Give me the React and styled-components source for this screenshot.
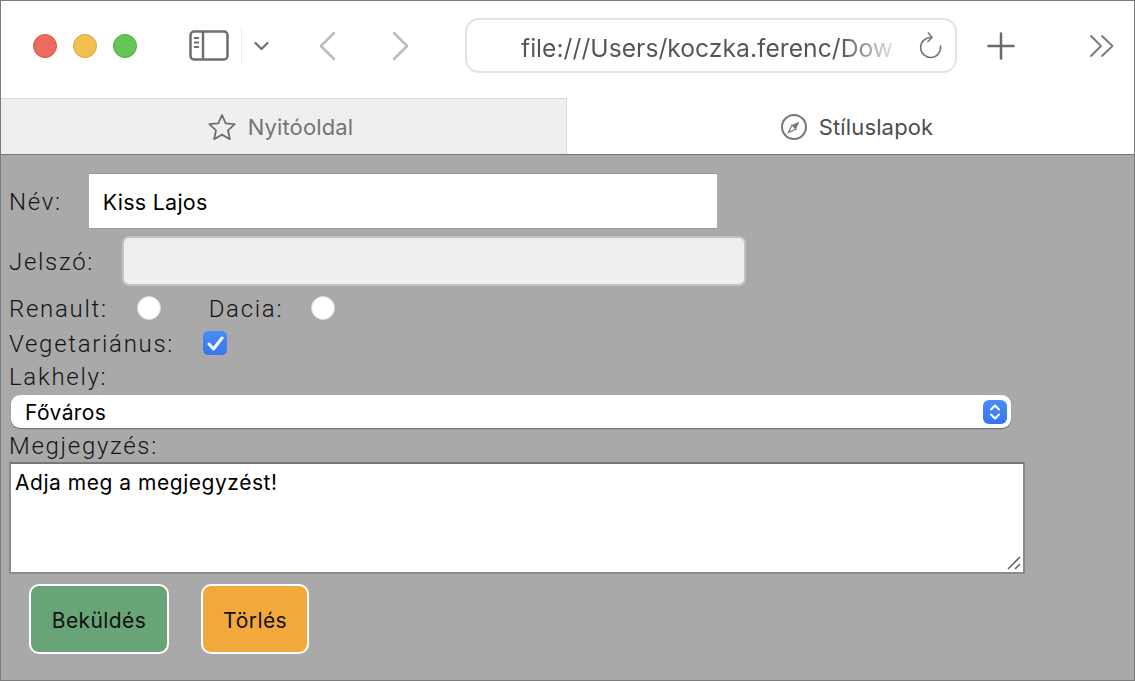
import React from "react";
import styled, { createGlobalStyle } from "styled-components";

const GlobalStyle = createGlobalStyle`
  html, body {
    margin: 0;
    padding: 0;
    background: #a9a9a9;
  }
  * {
    box-sizing: border-box;
  }
`;

const Window = styled.div`
  width: 1135px;
  height: 681px;
  border: 1px solid #7b7b7b;
  display: flex;
  flex-direction: column;
  overflow: hidden;
  font-family: Inter, "Liberation Sans", sans-serif;
  background: #a9a9a9;
`;

const Toolbar = styled.div`
  height: 97px;
  flex: none;
  background: #fff;
  display: flex;
  align-items: center;
  padding: 0 20px 8px 32px;
`;

const Light = styled.span`
  width: 24px;
  height: 24px;
  margin-right: 16px;
  border-radius: 50%;
  background: ${(p) => p.$color};
  border: 1px solid ${(p) => p.$edge};
  flex: none;
`;

const IconSlot = styled.div`
  flex: none;
  display: flex;
  align-items: center;
  margin-left: ${(p) => p.$left || 0}px;
`;

const Divider = styled.span`
  width: 1px;
  height: 35px;
  background: #ececec;
  margin-left: 12px;
  flex: none;
`;

const UrlBar = styled.div`
  flex: none;
  width: 492px;
  height: 55px;
  margin-left: 56px;
  border: 2px solid #e3e3e3;
  border-radius: 14px;
  display: flex;
  align-items: center;
  justify-content: space-between;
  padding: 0 12px 0 54px;
`;

const UrlText = styled.span`
  margin-top: 4px;
  white-space: nowrap;
  font-size: 24.7px;
  background: linear-gradient(90deg, #555 0 320px, #8d8d8d 340px, #e2e2e2 372px);
  -webkit-background-clip: text;
  background-clip: text;
  color: transparent;
`;

const Tabs = styled.div`
  height: 57px;
  flex: none;
  display: flex;
  border-bottom: 1px solid #777;
`;

const Tab = styled.div`
  width: ${(p) => (p.$active ? 567 : 566)}px;
  flex: none;
  display: flex;
  align-items: center;
  justify-content: center;
  gap: 11px;
  padding: ${(p) => (p.$active ? "0 0 0 12px" : "0 7px 0 0")};
  font-size: 22px;
  letter-spacing: 0.15px;
  color: ${(p) => (p.$active ? "#4d4d4d" : "#757575")};
  background: ${(p) => (p.$active ? "#fff" : "#efefef")};
  border-top: 1px solid ${(p) => (p.$active ? "#fff" : "#d8d8d8")};
  border-right: ${(p) => (p.$active ? "none" : "1px solid #d8d8d8")};
`;

const Form = styled.form`
  flex: 1;
  display: flex;
  flex-direction: column;
  align-items: flex-start;
  padding: 18px 0 0 8px;
  background: #a9a9a9;
`;

const Row = styled.div`
  display: flex;
  align-items: center;
  height: ${(p) => p.$height}px;
  margin-bottom: ${(p) => p.$gap || 0}px;
`;

const Label = styled.label`
  font-family: Roboto, Inter, sans-serif;
  font-weight: 300;
  font-size: 24px;
  letter-spacing: 1.7px;
  line-height: 26px;
  padding-top: 2px;
  color: #151515;
  margin-right: ${(p) => p.$right || 0}px;
`;

const NameInput = styled.input`
  width: 628px;
  height: 56px;
  border: none;
  border-top: 1px solid #999;
  border-bottom: 1px solid #999;
  outline: none;
  background: #fff;
  padding: 2px 14px 0;
  font-family: Inter, sans-serif;
  font-size: 21.5px;
  letter-spacing: 0.25px;
  color: #000;
`;

const PasswordInput = styled.input`
  width: 624px;
  height: 50px;
  border: 2px solid #c3c3c3;
  border-radius: 7px;
  outline: none;
  background: #eeeeee;
`;

const Radio = styled.input.attrs({ type: "radio" })`
  appearance: none;
  width: 24px;
  height: 24px;
  margin: 0 ${(p) => p.$right || 0}px 0 0;
  border-radius: 50%;
  background: #fff;
  border: 1px solid #d8d8d8;
  flex: none;
`;

const CheckBox = styled.span`
  width: 24px;
  height: 24px;
  border-radius: 5px;
  background: linear-gradient(#4a8cf7, #3676ee);
  display: flex;
  align-items: center;
  justify-content: center;
  flex: none;
`;

const Select = styled.div`
  width: 1000px;
  height: 33px;
  margin: 3px 0 0 2px;
  background: #fff;
  border-radius: 9px;
  box-shadow: 0 1px 1px rgba(0, 0, 0, 0.35);
  display: flex;
  align-items: center;
  justify-content: space-between;
  padding: 0 4px 0 14px;
  font-size: 21px;
  letter-spacing: 0.4px;
  color: #000;
`;

const SelectLabel = styled.span`
  padding-top: 2px;
`;

const SelectArrows = styled.span`
  width: 24px;
  height: 24px;
  border-radius: 6px;
  background: linear-gradient(#4a8cf7, #3676ee);
  display: flex;
  align-items: center;
  justify-content: center;
`;

const TextBox = styled.div`
  position: relative;
  width: 1016px;
  height: 112px;
  background: #fff;
  border: 2px solid #8a8a8a;
  border-top-color: #777;
  padding: 6px 4px;
  font-size: 21px;
  letter-spacing: 0.53px;
  line-height: 25px;
  color: #000;
`;

const ResizeGrip = styled.svg`
  position: absolute;
  right: 1px;
  bottom: 1px;
`;

const ButtonRow = styled.div`
  display: flex;
  gap: 32px;
  margin: 10px 0 0 20px;
`;

const Button = styled.button`
  height: 70px;
  width: ${(p) => p.$width}px;
  border: 2px solid #fff;
  border-radius: 10px;
  background: ${(p) => p.$color};
  font-family: Inter, sans-serif;
  font-size: 21px;
  letter-spacing: 0.4px;
  color: #111;
  padding: 2px 0 0;
`;

const Stroke = ({ d, color = "#6f6f6f", width = 2.5 }) => (
  <path d={d} fill="none" stroke={color} strokeWidth={width} strokeLinecap="round" strokeLinejoin="round" />
);

export default function App() {
  return (
    <>
      <GlobalStyle />
      <Window>
        <Toolbar>
          <Light $color="#ed6a5e" $edge="#d2564a" />
          <Light $color="#f5bf4f" $edge="#d9a23c" />
          <Light $color="#62c554" $edge="#52a942" />
          <IconSlot $left={36}>
            <svg width="40" height="32" viewBox="0 0 40 32">
              <rect x="1.5" y="1.5" width="37" height="28" rx="3.5" fill="none" stroke="#6f6f6f" strokeWidth="2.5" />
              <path d="M14 1.5V29.5" stroke="#6f6f6f" strokeWidth="2.5" />
              <path d="M5 8h5M5 12.5h5M5 17h5" stroke="#6f6f6f" strokeWidth="2" />
            </svg>
          </IconSlot>
          <Divider />
          <IconSlot $left={12}>
            <svg width="15" height="10" viewBox="0 0 15 10">
              <Stroke d="M1.5 2 7.5 8 13.5 2" width="2.2" />
            </svg>
          </IconSlot>
          <IconSlot $left={50}>
            <svg width="17" height="30" viewBox="0 0 17 30">
              <Stroke d="M15 2 2 15 15 28" color="#bcbcbc" />
            </svg>
          </IconSlot>
          <IconSlot $left={56}>
            <svg width="17" height="30" viewBox="0 0 17 30">
              <Stroke d="M2 2 15 15 2 28" color="#bcbcbc" />
            </svg>
          </IconSlot>
          <UrlBar>
            <UrlText>file:///Users/koczka.ferenc/Dow</UrlText>
            <svg width="24" height="28" viewBox="0 0 24 28">
              <Stroke d="M12 5.500A10 10 0 1 0 21.500 14" color="#777" width="1.6" />
              <Stroke d="M9.500 1 13 5.500 9 9.500" color="#777" width="1.6" />
            </svg>
          </UrlBar>
          <IconSlot $left={30}>
            <svg width="28" height="28" viewBox="0 0 28 28">
              <Stroke d="M14 1.500V26.500M1.500 14H26.500" color="#6a6a6a" />
            </svg>
          </IconSlot>
          <IconSlot $left={74}>
            <svg width="26" height="24" viewBox="0 0 26 24">
              <Stroke d="M2 2 12 12 2 22M13 2 23.500 12 13 22" color="#777" width="1.8" />
            </svg>
          </IconSlot>
        </Toolbar>
        <Tabs>
          <Tab>
            <svg width="30" height="28" viewBox="0 0 30 28">
              <path
                d="M15 2 18.700 10.300 27.700 11.200 21 17.300 22.900 26.200 15 21.600 7.100 26.200 9 17.300 2.300 11.200 11.300 10.300Z"
                fill="none"
                stroke="#6f6f6f"
                strokeWidth="1.8"
                strokeLinejoin="round"
              />
            </svg>
            Nyitóoldal
          </Tab>
          <Tab $active>
            <svg width="28" height="28" viewBox="0 0 28 28">
              <circle cx="14" cy="14" r="12" fill="none" stroke="#777" strokeWidth="2" />
              <path d="M19.500 8.500 16 16 12 12Z" fill="#777" />
              <path d="M8.500 19.500 12 12 16 16Z" fill="none" stroke="#777" strokeWidth="1.2" />
            </svg>
            Stíluslapok
          </Tab>
        </Tabs>
        <Form>
          <Row $height={56} $gap={7}>
            <Label $right={27}>Név:</Label>
            <NameInput defaultValue="Kiss Lajos" />
          </Row>
          <Row $height={50} $gap={6}>
            <Label $right={28}>Jelszó:</Label>
            <PasswordInput type="password" />
          </Row>
          <Row $height={32} $gap={6}>
            <Label $right={29}>Renault:</Label>
            <Radio name="car" $right={48} />
            <Label $right={28}>Dacia:</Label>
            <Radio name="car" />
          </Row>
          <Row $height={26} $gap={3}>
            <Label $right={29}>Vegetariánus:</Label>
            <CheckBox>
              <svg width="17" height="15" viewBox="0 0 17 15">
                <path d="M2 8 6.500 13 15 2" fill="none" stroke="#fff" strokeWidth="3" strokeLinecap="round" strokeLinejoin="round" />
              </svg>
            </CheckBox>
          </Row>
          <Row $height={33}>
            <Label>Lakhely:</Label>
          </Row>
          <Select>
            <SelectLabel>Főváros</SelectLabel>
            <SelectArrows>
              <svg width="12" height="18" viewBox="0 0 12 18">
                <Stroke d="M2 6.500 6 2.500 10 6.500M2 11.500 6 15.500 10 11.500" color="#fff" width="2" />
              </svg>
            </SelectArrows>
          </Select>
          <Row $height={34}>
            <Label>Megjegyzés:</Label>
          </Row>
          <TextBox>
            Adja meg a megjegyzést!
            <ResizeGrip width="16" height="16" viewBox="0 0 16 16">
              <path d="M2 14 14 2M9 14 14 9" stroke="#6a6a6a" strokeWidth="1.6" />
            </ResizeGrip>
          </TextBox>
          <ButtonRow>
            <Button type="button" $width={140} $color="#68a476">
              Beküldés
            </Button>
            <Button type="button" $width={108} $color="#f3a83b">
              Törlés
            </Button>
          </ButtonRow>
        </Form>
      </Window>
    </>
  );
}
